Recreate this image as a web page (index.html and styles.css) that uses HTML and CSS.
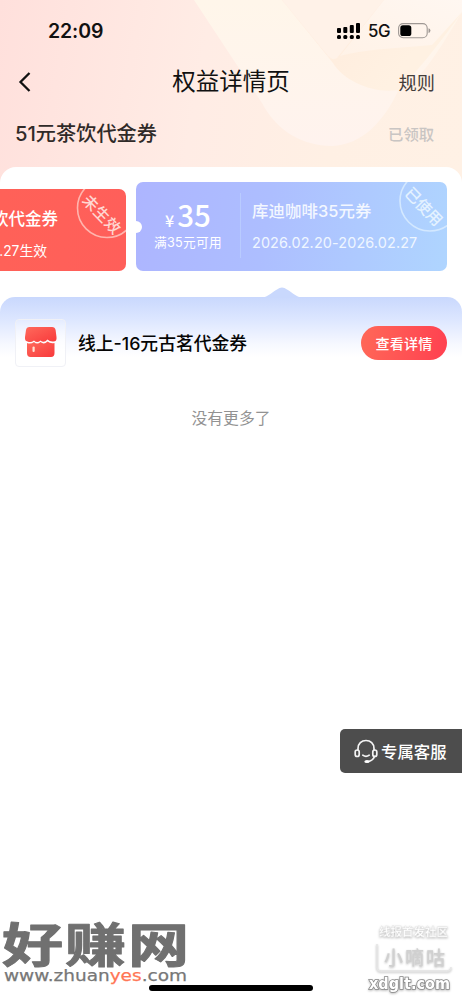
FILE: index.html
```html
<!DOCTYPE html>
<html lang="zh-CN">
<head>
<meta charset="utf-8">
<title>权益详情页</title>
<link rel="stylesheet" href="styles.css">
</head>
<body>
<div class="page">
  <header class="hero">
    <svg class="hero-art" viewBox="0 0 462 190" width="462" height="190">
      <defs>
        <linearGradient id="band" x1="0" y1="0" x2="0" y2="1"><stop offset="0" stop-color="#fff6ea"/><stop offset="1" stop-color="#fff3ee"/></linearGradient>
        <linearGradient id="inner" gradientUnits="userSpaceOnUse" x1="340" y1="55" x2="385" y2="90"><stop offset="0" stop-color="#ffeedf"/><stop offset="1" stop-color="#fff1e2"/></linearGradient>
        <linearGradient id="light" x1="0" y1="1" x2="1" y2="0"><stop offset="0" stop-color="#fff2e7"/><stop offset="1" stop-color="#fff7f1"/></linearGradient>
      </defs>
      <path d="M194 0L262 103C276 130 302 146 332 146C362 145 384 121 398 91C420 85 445 40 462 12V0Z" fill="url(#band)"/>
      <path d="M282 0L333 63C344 81 373 94 398 90C414 76 440 43 462 12V0Z" fill="url(#inner)"/>
      <path d="M282 0H384L337 58Q332 61 328 56Z" fill="#fff2e8"/>
      <path d="M384 0H462V12L432 45C402 48 364 49 340 56Z" fill="url(#light)"/>
    </svg>
    <div class="status">
      <span class="time">22:09</span>
      <div class="signals">
        <svg width="24" height="17" viewBox="0 0 24 17"><g fill="#000"><rect x="0" y="5" width="4" height="5" rx="1"/><rect x="6.3" y="4" width="4" height="6" rx="1"/><rect x="12.8" y="2" width="4" height="8" rx="1"/><rect x="19" y="0" width="4" height="10" rx="1"/><rect x="0" y="12" width="4" height="4" rx="1.5"/><rect x="6.3" y="12" width="4" height="4" rx="1.5"/><rect x="12.8" y="12" width="4" height="4" rx="1.5"/><rect x="19" y="12" width="4" height="4" rx="1.5"/></g></svg>
        <span class="net">5G</span>
        <svg width="33" height="16" viewBox="0 0 33 16"><rect x=".6" y=".6" width="28.6" height="14.2" rx="4.5" fill="none" stroke="#9f9894" stroke-width="1.1"/><rect x="2.3" y="2.3" width="11" height="10.8" rx="2.6"/><path d="M30.5 5.2Q32.4 5.5 32.4 7.6T30.5 10Z" fill="#9f9894"/></svg>
      </div>
    </div>
    <nav class="nav">
      <svg class="back" width="14" height="22" viewBox="0 0 14 22"><path d="M11.5 2L2.5 11L11.5 20" fill="none" stroke="#111" stroke-width="2.3"/></svg>
      <h1 class="nav-title">权益详情页</h1>
      <span class="rules">规则</span>
    </nav>
    <div class="benefit"><h2 class="benefit-name">51元茶饮代金券</h2><span class="claimed">已领取</span></div>
  </header>
  <main class="panel">
    <div class="coupons">
      <section class="coupon red">
        <div class="red-title">饮代金券</div>
        <div class="red-date">.27生效</div>
        <svg class="stamp" width="60" height="60" viewBox="0 0 60 60"><circle cx="41" cy="19" r="29.5" fill="none" stroke="#ffb5ae" stroke-width="1.6"/><text class="stamp-red" transform="translate(36 25) rotate(46)" x="0" y="6" text-anchor="middle" textLength="47">未生效</text></svg>
      </section>
      <section class="coupon blue">
        <i class="punch"></i>
        <div class="worth"><div class="amount"><span class="yen">¥</span>35</div><div class="condition">满35元可用</div></div>
        <div class="detail"><div class="coupon-name">库迪咖啡35元券</div><div class="coupon-date">2026.02.20-2026.02.27</div></div>
        <svg class="stamp" width="60" height="60" viewBox="0 0 60 60"><circle cx="41" cy="19" r="30" fill="none" stroke="#d3e8ff" stroke-width="1.6"/><text class="stamp-blue" transform="translate(35 24.500) rotate(46)" x="0" y="6" text-anchor="middle" textLength="46">已使用</text></svg>
      </section>
    </div>
    <section class="offers">
      <svg class="pointer" width="46" height="11" viewBox="0 0 46 11"><path d="M0 11C8 11 12 6 18 2.5Q23-1.5 28 2.5C34 6 38 11 46 11Z" fill="#c9d8fd"/></svg>
      <div class="offer">
        <div class="shop">
          <svg width="34" height="32" viewBox="0 0 34 32"><defs><linearGradient id="shop" x1="0" y1="0" x2="1" y2="1"><stop offset="0" stop-color="#ff6a5c"/><stop offset="1" stop-color="#f8393b"/></linearGradient></defs><path d="M5.500 0H28Q31 0 31.600 3L32.500 10Q33 14.500 29.500 14.500Q26 15 23.500 12.500Q20 16.500 16.500 13.500Q13 16.500 10 13.500Q7 16 3.500 14.500Q.5 14 1 10L2 3Q2.500 0 5.500 0Z" fill="url(#shop)"/><path d="M3 16Q7 17.500 10 15Q13 18 16.500 15Q20 18 23.500 14.500Q26.500 17 30.500 16V26Q30.500 30 27 30H6.500Q3 30 3 26Z" fill="url(#shop)"/><rect x="8.500" y="19.500" width="2.200" height="5.500" rx="1" fill="#ffe1d5"/></svg>
        </div>
        <div class="offer-name">线上-16元古茗代金券</div>
        <button class="view">查看详情</button>
      </div>
      <p class="end">没有更多了</p>
    </section>
  </main>
  <aside class="support">
    <svg width="24" height="25" viewBox="0 0 24 25"><g fill="none" stroke="#f3f3f3" stroke-width="1.7" stroke-linecap="round"><path d="M4 11V9.500C4 4.500 7.500 1.500 12 1.500S20 4.500 20 9.500V11"/><rect x="1.200" y="11" width="4" height="6.500" rx="2"/><rect x="18.800" y="11" width="4" height="6.500" rx="2"/><path d="M20.500 17.500Q19 21.500 14.500 22.500M8.800 16.200Q12 18.700 15.200 16.200"/></g><ellipse cx="13" cy="22.500" rx="2.700" ry="1.600" fill="#fff"/></svg>
    <span>专属客服</span>
  </aside>
  <svg class="brand" width="192" height="70" viewBox="0 0 192 70"><text class="brand-cn" transform="scale(1.3 1)" x="1.500" y="45" textLength="144">好赚网</text><text class="brand-url" y="64" x="4" textLength="183" lengthAdjust="spacingAndGlyphs">www.zhuan<tspan class="brand-yes">yes</tspan>.com</text></svg>
  <svg class="forum" width="94" height="76" viewBox="0 0 94 76"><text class="forum-tag" x="11" y="16" textLength="69">线报首发社区</text><path class="forum-box" d="M9 24V47Q9 51 13 51H79Q83 51 83 47"/><text class="forum-name" x="16" y="45" textLength="61">小嘀咕</text><text class="forum-url" x="1" y="69" textLength="81" lengthAdjust="spacingAndGlyphs">xdglt.com</text></svg>
  <i class="home"></i>
</div>
</body>
</html>
```
FILE: styles.css
```css
* { box-sizing: border-box; }
body { margin: 0; background: #fff; font-family: Inter, "Noto Sans CJK SC", sans-serif; color: #111; }
h1, h2, p { margin: 0; font-weight: 400; }
svg { display: block; flex: none; }
.page { position: relative; width: 462px; height: 1000px; overflow: hidden; white-space: nowrap; }
.hero { position: relative; height: 190px; background: linear-gradient(100deg, #ffe0dc 0%, #ffece5 43%, #fff0e4 72%, #fff1e5 100%); }
.hero-art { position: absolute; inset: 0; }
.status { position: relative; display: flex; justify-content: space-between; align-items: center; height: 62px; padding: 0 31px 0 48px; }
.time { font-size: 19.5px; font-weight: 600; letter-spacing: -.1px; }
.signals { display: flex; align-items: center; }
.net { width: 37px; padding-left: 7px; font-size: 16.8px; font-weight: 500; letter-spacing: -.4px; }
.nav { position: relative; display: grid; grid-template-columns: 80px 1fr 80px; align-items: center; height: 39px; padding: 0 27px 0 18px; }
.nav-title { padding-left: 9px; text-align: center; font-size: 23.5px; line-height: 39px; color: #111; }
.rules { justify-self: end; font-size: 18.2px; color: #443d3b; }
.benefit { position: relative; display: flex; justify-content: space-between; align-items: center; height: 64px; padding: 0 28px 0 15px; }
.benefit-name { margin-top: -1px; font-size: 20.2px; font-weight: 500; color: #302a28; }
.claimed { font-size: 15.3px; font-weight: 500; color: #c9c5c3; }
.panel { position: relative; margin-top: -23px; background: #fff; border-radius: 16px 16px 0 0; height: 833px; padding-top: 15px; }
.coupons { display: flex; align-items: flex-end; gap: 10px; height: 89px; }
.coupon { position: relative; overflow: hidden; color: #fff; }
.red { width: 126px; height: 82px; border-radius: 0 7px 7px 0; background: linear-gradient(90deg, #ff6158, #ff5f5a); }
.red-title { display: flex; justify-content: flex-end; width: 58px; margin-top: 18px; font-size: 16.5px; line-height: 24px; font-weight: 500; }
.red-date { display: flex; justify-content: flex-end; width: 47px; margin-top: 9px; font-size: 13.8px; line-height: 22px; }
.stamp { position: absolute; right: 0; top: 0; overflow: visible; }
.blue .stamp { right: -2px; }
.stamp-red, .stamp-blue { font: 500 15.5px "Noto Sans CJK SC", sans-serif; fill: #ffd7d2; }
.stamp-blue { fill: #e4f2ff; }
.blue { display: flex; width: 311px; height: 89px; border-radius: 7px; background: linear-gradient(100deg, #adb5ff 0%, #adbeff 42%, #afd5ff 100%); }
.punch { position: absolute; left: -7px; top: 39px; width: 13px; height: 12px; border-radius: 6px; background: #fff; }
.worth { width: 104px; padding-top: 12px; text-align: center; }
.amount { height: 40px; font: 500 29.500px/40px "Noto Sans CJK SC", sans-serif; }
.yen { margin-right: 3px; font-size: 16px; }
.condition { font-size: 12.7px; line-height: 18px; margin-top: 0; letter-spacing: .25px; }
.detail { width: 190px; height: 65px; margin-top: 11px; padding: 6px 0 0 11px; border-left: 1px solid #b9cbff; }
.coupon-name { font-size: 16.4px; line-height: 24px; font-weight: 500; letter-spacing: .1px; color: #f3f7ff; }
.coupon-date { margin-top: 9px; font-size: 14.4px; line-height: 22px; letter-spacing: .13px; color: #eff6ff; }
.offers { position: relative; margin-top: 26px; padding: 21px 15px 0; height: 230px; border-radius: 15px 15px 0 0; background: linear-gradient(#c9d8fd 0, #dce6ff 22px, #f6f8ff 47px, #fff 60px); }
.pointer { position: absolute; left: 259px; top: -10px; }
.offer { display: flex; align-items: center; height: 50px; }
.shop { display: flex; justify-content: center; align-items: center; width: 51px; height: 48px; margin-top: -1px; margin-right: 12px; border: 1px solid #f0f1f6; border-radius: 4px; background: linear-gradient(rgba(255,255,255,.2), #fff 70%); }
.offer-name { margin-top: -3px; font-size: 17.8px; font-weight: 500; color: #050505; }
.view { width: 86px; height: 34px; margin-top: -1px; margin-left: auto; padding: 0; border: 0; border-radius: 18px; background: linear-gradient(100deg, #ff6858, #ff4050); color: #fff; font: 500 14px "Noto Sans CJK SC", sans-serif; letter-spacing: .2px; }
.end { margin-top: 39px; text-align: center; font-size: 15.8px; line-height: 24px; color: #929292; }
.support { position: absolute; right: 0; top: 729px; display: flex; align-items: center; gap: 3px; width: 122px; height: 44px; padding-left: 14px; border-radius: 5px 0 0 5px; background: #4d4d4d; color: #fff; font-size: 16.4px; font-weight: 500; }
.brand { position: absolute; left: 0; top: 917px; overflow: visible; }
.brand-cn { font: 700 47px "Noto Sans CJK SC", sans-serif; fill: #707070; stroke: #707070; stroke-width: 1px; stroke-linejoin: round; }
.brand-url { font: 16px "DejaVu Sans", sans-serif; fill: #777; stroke: #777; stroke-width: .25px; }
.brand-yes { fill: #ff7655; stroke: #ff7655; }
.forum { position: absolute; left: 368px; top: 920px; filter: drop-shadow(0 1px 1px #bbb); }
.forum-tag { font: 700 11.5px "Noto Sans CJK SC", sans-serif; fill: #fff; stroke: #e4e4e4; stroke-width: .4px; }
.forum-box { fill: none; stroke: #e6e6e6; stroke-width: 1.5px; }
.forum-name { font: 500 19px "Noto Sans CJK SC", sans-serif; fill: #d0d0d0; }
.forum-url { font: 700 15px "DejaVu Sans", sans-serif; fill: #fff; stroke: #888; stroke-width: 1.6px; paint-order: stroke; }
.home { position: absolute; left: 149px; top: 985px; width: 164px; height: 6px; border-radius: 3px; background: #000; }
```
